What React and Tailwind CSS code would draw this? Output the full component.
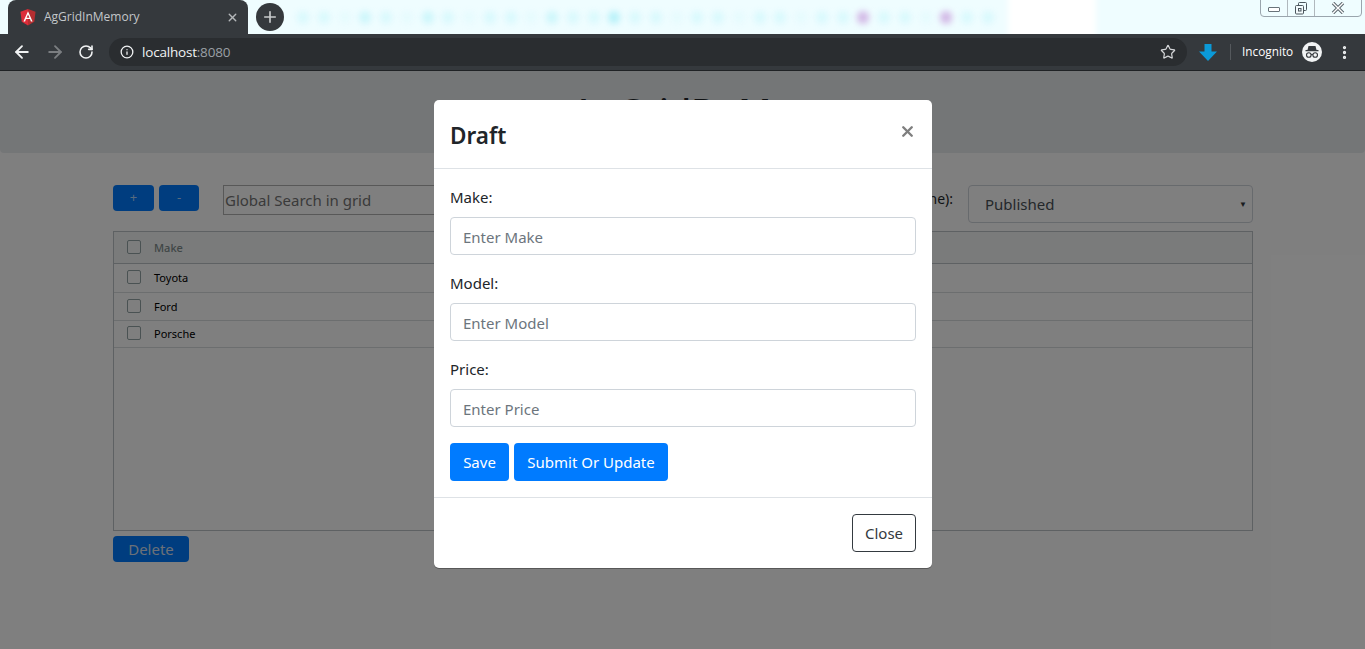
import React from 'react';
import { ArrowLeft, ArrowRight, RotateCw, Info, Star, Plus, X, MoreVertical } from 'lucide-react';

const FONT = "font-['Noto_Sans','Open_Sans',sans-serif]";

// wallpaper dots seen behind the tab strip
const DOTS = [
  '#d9f9fd', '#d9f9fd', '#e6fbfe', '#cdf6fb', '#d9f9fd', '#e6fbfe', '#cdf6fb', '#d9f9fd', '#e6fbfe', '#d9f9fd',
  '#d9f9fd', '#e6fbfe', '#cdf6fb', '#d9f9fd', '#d9f9fd', '#b8f1f9', '#d9f9fd', '#d9f9fd', '#e6fbfe', '#d9f9fd',
  '#d9f9fd', '#e6fbfe', '#d9f9fd', '#d9f9fd', '#e6fbfe', '#d9f9fd', '#d9f9fd', '#d2b8e6', '#d9f9fd', '#d9f9fd',
  '#e6fbfe', '#d2b8e6', '#d9f9fd', '#d9f9fd',
];

const AngularIcon = () => (
  <svg width="16" height="17" viewBox="0 0 16 17" className="shrink-0">
    <path d="M8 0 L15.5 2.7 L14.3 12.8 L8 16.5 Z" fill="#b52e31" />
    <path d="M8 0 L0.5 2.7 L1.7 12.8 L8 16.5 Z" fill="#dd2c3a" />
    <path d="M8 2.2 L3.4 12.4 H5.1 L6 10.1 H10 L10.9 12.4 H12.6 Z M8 5.6 L9.4 8.7 H6.6 Z" fill="#fff" fillRule="evenodd" />
  </svg>
);

const IncognitoIcon = () => (
  <div className="w-5 h-5 rounded-full bg-[#f1f3f4] flex items-center justify-center">
    <svg width="16" height="14" viewBox="0 0 16 14" fill="none">
      <path d="M4.5 1 H11.5 L12.5 5 H3.5 Z" fill="#35393d" />
      <path d="M1.5 5.6 H14.5" stroke="#35393d" strokeWidth="1.3" />
      <circle cx="4.8" cy="10" r="2.3" stroke="#35393d" strokeWidth="1.1" />
      <circle cx="11.2" cy="10" r="2.3" stroke="#35393d" strokeWidth="1.1" />
      <path d="M7 9.6 H9" stroke="#35393d" strokeWidth="1" />
    </svg>
  </div>
);

const WindowControls = () => (
  <div className="absolute right-[3px] top-[-1px] w-[102px] h-[18px] border border-[#9aa5ad] rounded-b-[4px] flex items-center">
    <div className="w-[27px] flex justify-center border-r border-[#b0b8bd] h-full items-center">
      <span className="block w-[12px] h-[5px] border border-[#68737a] bg-white rounded-[1px] mt-[3px]" />
    </div>
    <div className="w-[27px] flex justify-center border-r border-[#b0b8bd] h-full items-center">
      <svg width="12" height="13" viewBox="0 0 12 13" fill="none" stroke="#4b565d">
        <rect x="3.5" y="0.5" width="8" height="8" rx="1" />
        <rect x="0.5" y="3.5" width="8" height="8.5" rx="1" fill="#f2fafc" />
        <rect x="3.5" y="6.5" width="2.5" height="2.5" />
      </svg>
    </div>
    <div className="flex-1 flex justify-center">
      <svg width="16" height="12" viewBox="0 0 16 12">
        <path d="M3 1 L13 11 M13 1 L3 11" stroke="#5d686f" strokeWidth="3.4" />
        <path d="M3 1 L13 11 M13 1 L3 11" stroke="#fff" strokeWidth="1.4" />
      </svg>
    </div>
  </div>
);

const BrowserChrome = () => (
  <div className="relative z-20 shrink-0">
    <div className="h-[34px] bg-[#effdff] flex items-end relative overflow-hidden">
      <div className="absolute inset-0 flex items-center gap-[8.75px] pl-[297px]">
        {DOTS.map((color, i) => (
          <span key={i} className="shrink-0 w-3 h-[13px] rounded-full blur-[3px]" style={{ backgroundColor: color }} />
        ))}
      </div>
      <div className="absolute top-[-10px] bottom-[-10px] left-[1008px] w-[88px] bg-white blur-[3px]" />
      <div className="relative ml-2 w-[240px] h-[34px] bg-[#35393d] rounded-t-lg flex items-center pl-[12px] pr-[9px] gap-[8px]">
        <AngularIcon />
        <span className="text-[12px] text-[#c4c7ca] font-['Open_Sans',sans-serif] flex-1">AgGridInMemory</span>
        <X size={13} strokeWidth={2.5} className="text-[#b4b7ba]" />
      </div>
      <div className="relative ml-2 self-start mt-[3px] w-7 h-7 rounded-full bg-[#35393d] flex items-center justify-center">
        <Plus size={18} strokeWidth={2.2} className="text-[#c8cacc]" />
      </div>
      <WindowControls />
    </div>
    <div className="h-[37px] bg-[#35393d] border-b border-[#1f2225] flex items-center font-['Open_Sans',sans-serif]">
      <ArrowLeft size={20} strokeWidth={2.2} className="ml-[12px] text-[#f1f3f4]" />
      <ArrowRight size={20} strokeWidth={2.2} className="ml-[13px] text-[#7b7e81]" />
      <RotateCw size={16} strokeWidth={2.4} className="ml-[13px] text-[#f1f3f4]" />
      <div className="ml-[15px] w-[1078px] h-7 bg-[#2a2d30] rounded-full flex items-center pl-[11px] pr-[11px]">
        <Info size={14} strokeWidth={2.2} className="text-[#f1f3f4]" />
        <span className="ml-[8px] text-[13.5px] text-[#f1f3f4] tracking-[-0.2px]">localhost<span className="text-[#9aa0a6]">:8080</span></span>
        <Star size={16} strokeWidth={1.8} className="ml-auto text-[#d5d7d9]" />
      </div>
      <svg width="18" height="17" viewBox="0 0 18 17" className="ml-[12px]">
        <path d="M5.5 0 H12.5 V7.5 H18 L9 17 L0 7.5 H5.5 Z" fill="#0b9ad8" />
      </svg>
      <span className="ml-[13px] w-px h-4 bg-[#55595d]" />
      <span className="ml-[11px] text-[11.8px] text-white">Incognito</span>
      <div className="ml-[9px]"><IncognitoIcon /></div>
      <MoreVertical size={17} strokeWidth={2.6} className="ml-[14px] text-[#f1f3f4]" />
    </div>
  </div>
);

const GridRow = ({ label, h, header }) => (
  <div className={`flex items-center border-b ${h} ${header ? 'border-[#bdc3c7] bg-[#f5f7f7]' : 'border-[#d9dcde]'}`}>
    <span className="ml-[13px] w-[14px] h-[14px] border border-[#95a5a6] rounded-[2px] bg-white/40 mb-[2px]" />
    <span className={`ml-[13px] pt-[1px] text-[11px] ${header ? 'font-medium text-[#7f8c8d]' : 'text-black'}`}>{label}</span>
  </div>
);

const Page = () => (
  <div className={`h-full bg-white ${FONT}`}>
    <div className="h-[82px] bg-[#e9ecef] rounded-b-[4px] flex justify-center pt-[23px]">
      <h1 className="text-[36px] leading-none font-medium text-[#212529]">AgGridDeMo</h1>
    </div>
    <div className="ml-[113px] mr-[112px] pt-8">
      <div className="flex items-start h-[46px]">
        <button className="w-[41px] h-[26px] bg-[#007bff] rounded-[4px] text-[13px] text-white/70">+</button>
        <button className="ml-[5px] w-10 h-[26px] bg-[#007bff] rounded-[4px] text-[13px] text-white/70">-</button>
        <input
          readOnly
          value="Global Search in grid"
          className="ml-6 w-[300px] h-[30px] border border-[#b0b0b0] px-[1px] text-[15px] text-[#757575]"
        />
        <span className="ml-auto mr-[15px] mt-[3px] text-[14px] text-[#212529]">(Draft/Done):</span>
        <div className="w-[285px] h-[38px] border border-[#ced4da] rounded-[4px] flex items-center justify-between pl-4 pr-[5px] text-[15px] text-[#495057]">
          Published
          <span className="text-[8px] text-[#343a40]">▼</span>
        </div>
      </div>
      <div className="h-[300px] border border-[#bdc3c7]">
        <GridRow header label="Make" h="h-[32px]" />
        <GridRow label="Toyota" h="h-[29px]" />
        <GridRow label="Ford" h="h-[28px]" />
        <GridRow label="Porsche" h="h-[27px]" />
      </div>
      <button className="mt-[5px] w-[76px] h-[26px] bg-[#007bff] rounded-[4px] text-[15px] text-[#d8e0f0]">Delete</button>
    </div>
  </div>
);

const Field = ({ label, placeholder }) => (
  <div className="mb-4">
    <label className="block text-[15px] leading-6 mb-2 text-[#212529]">{label}</label>
    <input
      placeholder={placeholder}
      className="block w-full h-[38px] border border-[#ced4da] rounded-[4px] px-3 pt-[1px] text-[15px] text-[#495057] placeholder:text-[#6c757d]"
    />
  </div>
);

const DraftModal = () => (
  <div className={`absolute top-[29px] left-[434px] w-[498px] h-[468px] bg-white rounded-[5px] shadow-[0_1px_0_rgba(0,0,0,0.3)] flex flex-col ${FONT}`}>
    <div className="h-[69px] border-b border-[#dee2e6] flex justify-between px-4">
      <h5 className="text-[22.5px] font-semibold leading-9 mt-[18px] text-[#212529]">Draft</h5>
      <X size={17} strokeWidth={3.4} className="mt-[23px] text-[#7f7f7f]" />
    </div>
    <div className="h-[329px] border-b border-[#dee2e6] px-4 pt-4">
      <Field label="Make:" placeholder="Enter Make" />
      <Field label="Model:" placeholder="Enter Model" />
      <Field label="Price:" placeholder="Enter Price" />
      <div className="flex gap-[5px]">
        <button className="w-[59px] h-[38px] bg-[#007bff] rounded-[4px] text-[15px] text-white">Save</button>
        <button className="w-[154px] h-[38px] bg-[#007bff] rounded-[4px] text-[15px] text-white">Submit Or Update</button>
      </div>
    </div>
    <div className="flex-1 flex justify-end items-center px-4">
      <button className="w-16 h-[38px] border border-[#343a40] rounded-[4px] text-[15px] text-[#343a40]">Close</button>
    </div>
  </div>
);

export default function App() {
  return (
    <div className="h-[649px] w-full overflow-hidden flex flex-col">
      <BrowserChrome />
      <div className="relative flex-1">
        <Page />
        <div className="absolute inset-0 bg-black/50" />
        <DraftModal />
      </div>
    </div>
  );
}
